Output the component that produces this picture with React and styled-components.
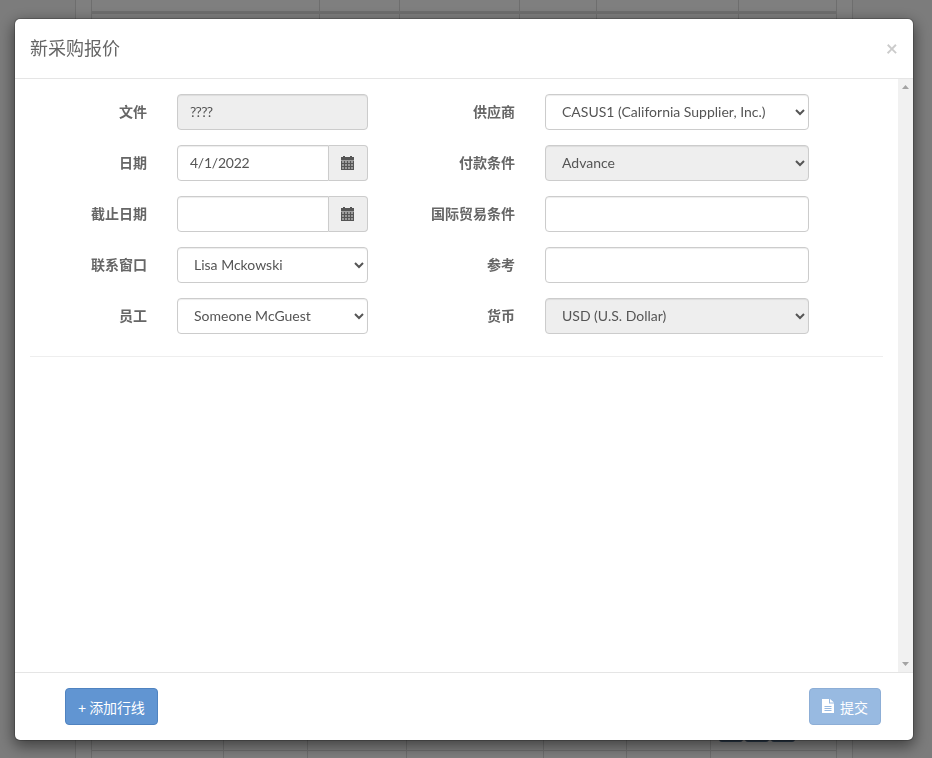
import React from "react";
import styled, { createGlobalStyle } from "styled-components";

const FONT = `Lato, "Noto Sans CJK SC", "Noto Sans", sans-serif`;

const Global = createGlobalStyle`
  html, body { margin: 0; padding: 0; background: #fff; }
  body { font-family: ${FONT}; font-size: 14px; color: #555; overflow: hidden; }
  * { box-sizing: border-box; }
`;

const Page = styled.div`
  height: 758px;
  padding: 0 79px 0 75px;
  overflow: hidden;
  background: #f8f8f8;
`;
const Sheet = styled.div`
  height: 100%;
  padding: 0 15px;
  background: #fff;
  border-left: 1px solid #ddd;
  border-right: 1px solid #ddd;
  display: flex;
  flex-direction: column;
  justify-content: space-between;
`;
const BgRow = styled.div`
  display: grid;
  grid-template-columns: ${(p) => p.$cols};
  height: ${(p) => p.$h}px;
  border-bottom: ${(p) => p.$line || 0}px solid #ddd;
  border-left: 1px solid #ddd;
  border-right: 1px solid #ddd;
`;
const BgCell = styled.div`
  border-left: 1px solid #ddd;
  &:first-child { border-left: 0; }
`;
const BgActions = styled(BgCell)`
  display: flex;
  gap: 2px;
  padding-left: 8px;
`;
const BgAction = styled.div`
  width: 24px;
  height: 10px;
  border-radius: 3px;
  background: #5a7797;
`;

const Backdrop = styled.div`
  position: fixed;
  inset: 0;
  background: rgba(0, 0, 0, 0.5);
`;
const Modal = styled.div`
  margin: 18px 0 0 14px;
  width: 900px;
  height: 723px;
  display: flex;
  flex-direction: column;
  background: #fff;
  background-clip: padding-box;
  border: 1px solid rgba(0, 0, 0, 0.2);
  border-radius: 6px;
  box-shadow: 0 5px 15px rgba(0, 0, 0, 0.5);
`;
const Header = styled.header`
  height: 60px;
  flex: none;
  padding: 0 15px;
  display: flex;
  align-items: center;
  justify-content: space-between;
  border-bottom: 1px solid #e5e5e5;
`;
const Title = styled.h4`
  margin: 0;
  font-size: 18px;
  font-weight: 400;
  line-height: 1.4;
  color: #666;
`;
const Close = styled.button`
  padding: 0;
  margin-bottom: 2px;
  border: 0;
  background: none;
  font-family: ${FONT};
  font-size: 21px;
  font-weight: 700;
  line-height: 1;
  color: #000;
  opacity: 0.2;
`;
const BodyWrap = styled.div`
  flex: 1;
  min-height: 0;
  display: flex;
`;
const Content = styled.div`
  flex: 1;
  padding: 15px 15px 0;
`;
const FormGrid = styled.div`
  display: grid;
  grid-template-columns: 117px 191px 117px 264px;
  column-gap: 30px;
  row-gap: 15px;
  grid-auto-rows: 36px;
  padding-bottom: 22px;
  border-bottom: 1px solid #eee;
`;
const Label = styled.label`
  font-weight: 700;
  line-height: 36px;
  text-align: right;
  white-space: nowrap;
  color: #666;
`;
const controlCss = `
  display: block;
  width: 100%;
  height: 36px;
  font-family: ${FONT};
  font-size: 14px;
  line-height: 1.43;
  color: #555;
  background-color: #fff;
  border: 1px solid #ccc;
  border-radius: 4px;
  box-shadow: inset 0 1px 1px rgba(0, 0, 0, 0.075);
  outline: 0;
  &:disabled, &[readonly] { background-color: #eee; opacity: 1; }
`;
const Input = styled.input`
  ${controlCss}
  padding: 4px 12px 6px;
  letter-spacing: ${(p) => p.$spacing || 0}px;
`;
const Select = styled.select`
  ${controlCss}
  padding: 4px 12px 6px;
`;
const InputGroup = styled.div`
  display: flex;
  & > input { flex: 1; min-width: 0; border-radius: 4px 0 0 4px; }
`;
const Addon = styled.span`
  flex: none;
  width: 39px;
  padding-left: 12px;
  display: flex;
  align-items: center;
  background: #eee;
  border: 1px solid #ccc;
  border-left: 0;
  border-radius: 0 4px 4px 0;
`;
const Track = styled.div`
  flex: none;
  width: 15px;
  display: flex;
  flex-direction: column;
  justify-content: space-between;
  align-items: center;
  padding: 6px 0;
  background: #f1f1f1;
`;
const Footer = styled.footer`
  height: 68px;
  flex: none;
  padding: 15px 32px 15px 50px;
  display: flex;
  align-items: flex-start;
  justify-content: space-between;
  border-top: 1px solid #e5e5e5;
`;
const Button = styled.button`
  height: 37px;
  padding: 6px 12px;
  display: inline-flex;
  align-items: center;
  gap: ${(p) => p.$gap || 0}px;
  font-family: ${FONT};
  font-size: 14px;
  letter-spacing: ${(p) => p.$spacing || 0}px;
  color: #fff;
  background: #6195d2;
  border: 1px solid #5083c0;
  border-radius: 4px;
  &:disabled { opacity: 0.65; }
`;
const FileSvg = styled.svg`
  margin-bottom: 1px;
`;

const cells = [];
[5, 8, 11].forEach((y) => [1, 4, 7, 10].forEach((x) => cells.push([x, y])));
const CalendarIcon = () => (
  <svg width="13" height="14" viewBox="0 0 13 14" aria-hidden="true">
    <path fill="#555" d="M2 0h2v1h5V0h2v1h2v3H0V1h2zM0 4.6h13V14H0z" />
    {cells.map(([x, y]) => (
      <rect key={`${x}-${y}`} x={x} y={y} width="2" height="2" fill="#9a9a9a" />
    ))}
  </svg>
);
const FileIcon = () => (
  <FileSvg width="12" height="14" viewBox="0 0 12 14" aria-hidden="true">
    <path
      fill="#fff"
      fillRule="evenodd"
      d="M0 0h7v4.5h5V14H0zM2.5 7v1h7V7zm0 2v1h7V9zm0 2v1h7v-1zM8 0l4 3.5H8z"
    />
  </FileSvg>
);
const Tri = ({ up }) => (
  <svg width="7" height="4" viewBox="0 0 7 4" aria-hidden="true">
    <path fill="#a3a3a3" d={up ? "M3.5 0L7 4H0z" : "M0 0h7L3.5 4z"} />
  </svg>
);
const DateField = ({ value }) => (
  <InputGroup>
    <Input defaultValue={value} $spacing={-0.25} />
    <Addon>
      <CalendarIcon />
    </Addon>
  </InputGroup>
);
const Opt = ({ text, disabled }) => (
  <Select disabled={disabled} defaultValue={text}>
    <option>{text}</option>
  </Select>
);

const topCols = "227px 80px 120px 77px 142px 1fr";
const botCols = "131px 84px 99px 137px 83px 84px 1fr";

export default function App() {
  return (
    <>
      <Global />
      <Page>
        <Sheet>
          <div>
            <BgRow $cols={topCols} $h={14} $line={3}>
              {[0, 1, 2, 3, 4, 5].map((i) => (
                <BgCell key={i} />
              ))}
            </BgRow>
            <BgRow $cols={topCols} $h={8}>
              {[0, 1, 2, 3, 4, 5].map((i) => (
                <BgCell key={i} />
              ))}
            </BgRow>
          </div>
          <div>
            <BgRow $cols={botCols} $h={19} $line={1}>
              {[0, 1, 2, 3, 4, 5].map((i) => (
                <BgCell key={i} />
              ))}
              <BgActions>
                <BgAction />
                <BgAction />
                <BgAction />
              </BgActions>
            </BgRow>
            <BgRow $cols={botCols} $h={7}>
              {[0, 1, 2, 3, 4, 5, 6].map((i) => (
                <BgCell key={i} />
              ))}
            </BgRow>
          </div>
        </Sheet>
      </Page>
      <Backdrop>
        <Modal>
          <Header>
            <Title>新采购报价</Title>
            <Close>×</Close>
          </Header>
          <BodyWrap>
            <Content>
              <FormGrid>
                <Label>文件</Label>
                <Input readOnly defaultValue="????" $spacing={-0.7} />
                <Label>供应商</Label>
                <Opt text="CASUS1 (California Supplier, Inc.)" />

                <Label>日期</Label>
                <DateField value="4/1/2022" />
                <Label>付款条件</Label>
                <Opt text="Advance" disabled />

                <Label>截止日期</Label>
                <DateField value="" />
                <Label>国际贸易条件</Label>
                <Input />

                <Label>联系窗口</Label>
                <Opt text="Lisa Mckowski" />
                <Label>参考</Label>
                <Input />

                <Label>员工</Label>
                <Opt text="Someone McGuest" />
                <Label>货币</Label>
                <Opt text="USD (U.S. Dollar)" disabled />
              </FormGrid>
            </Content>
            <Track>
              <Tri up />
              <Tri />
            </Track>
          </BodyWrap>
          <Footer>
            <Button $spacing={-0.2}>+ 添加行线</Button>
            <Button disabled $gap={6}>
              <FileIcon />
              提交
            </Button>
          </Footer>
        </Modal>
      </Backdrop>
    </>
  );
}
